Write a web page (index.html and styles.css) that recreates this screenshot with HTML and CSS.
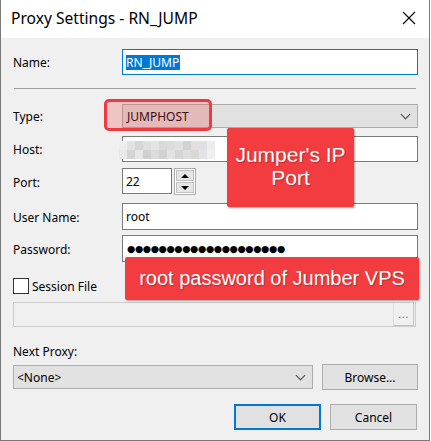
FILE: index.html
```html
<!DOCTYPE html>
<html lang="en">
<head>
  <meta charset="UTF-8">
  <title>Proxy Settings - RN_JUMP</title>
  <link rel="stylesheet" href="styles.css">
</head>
<body>
  <div class="window">
    <div class="titlebar">
      <span class="title">Proxy Settings - RN_JUMP</span>
      <svg class="close" width="14" height="14" viewBox="0 0 14 14">
        <path d="M1 1 L13 13 M13 1 L1 13" stroke="#000" stroke-width="1.1" fill="none"/>
      </svg>
    </div>

    <div class="content">
      <div class="row name-row">
        <label>Name:</label>
        <div class="field focused"><span class="selected">RN_JUMP</span></div>
      </div>

      <hr class="sep">

      <div class="row type-row">
        <label>Type:</label>
        <div class="combo"><span>JUMPHOST</span><span class="chev"></span></div>
        <div class="mark"></div>
      </div>

      <div class="row host-row">
        <label>Host:</label>
        <div class="field">
          <svg class="blur" width="104" height="18" viewBox="0 0 104 18">
            <rect x="0" y="0" width="8" height="9" fill="#eeeeee"/>
            <rect x="8" y="0" width="8" height="9" fill="#e2e2e2"/>
            <rect x="16" y="0" width="8" height="9" fill="#d6d6d6"/>
            <rect x="24" y="0" width="8" height="9" fill="#dedede"/>
            <rect x="32" y="0" width="8" height="9" fill="#e4e4e4"/>
            <rect x="40" y="0" width="8" height="9" fill="#d9d9d9"/>
            <rect x="48" y="0" width="8" height="9" fill="#dcdcdc"/>
            <rect x="56" y="0" width="8" height="9" fill="#e0e0e0"/>
            <rect x="64" y="0" width="8" height="9" fill="#d3d3d3"/>
            <rect x="72" y="0" width="8" height="9" fill="#e6dede"/>
            <rect x="80" y="0" width="8" height="9" fill="#dde1e6"/>
            <rect x="88" y="0" width="8" height="9" fill="#ececec"/>
            <rect x="0" y="9" width="8" height="9" fill="#e8e8e8"/>
            <rect x="8" y="9" width="8" height="9" fill="#d4d4d4"/>
            <rect x="16" y="9" width="8" height="9" fill="#e6e6e6"/>
            <rect x="24" y="9" width="8" height="9" fill="#d0d0d0"/>
            <rect x="32" y="9" width="8" height="9" fill="#dbdbdb"/>
            <rect x="40" y="9" width="8" height="9" fill="#d1d1d1"/>
            <rect x="48" y="9" width="8" height="9" fill="#e3e3e3"/>
            <rect x="56" y="9" width="8" height="9" fill="#d5d5d5"/>
            <rect x="64" y="9" width="8" height="9" fill="#dedede"/>
            <rect x="72" y="9" width="8" height="9" fill="#d8d8d8"/>
            <rect x="80" y="9" width="8" height="9" fill="#e4e4e4"/>
            <rect x="88" y="9" width="8" height="9" fill="#f0f0f0"/>
          </svg>
        </div>
      </div>

      <div class="row port-row">
        <label>Port:</label>
        <div class="port">
          <div class="field small">22</div>
          <div class="spin">
            <div class="spin-btn"><span class="up"></span></div>
            <div class="spin-btn"><span class="down"></span></div>
          </div>
        </div>
      </div>

      <div class="row user-row">
        <label>User Name:</label>
        <div class="field">root</div>
      </div>

      <div class="row pass-row">
        <label>Password:</label>
        <div class="field dots">●●●●●●●●●●●●●●●●●●●●</div>
      </div>

      <div class="check-row">
        <span class="box"></span>
        <span>Session File</span>
      </div>

      <div class="path">
        <span class="dots-btn">...</span>
      </div>

      <div class="next-label">Next Proxy:</div>
      <div class="next-row">
        <div class="combo plain"><span>&lt;None&gt;</span><span class="chev"></span></div>
        <div class="btn browse">Browse...</div>
      </div>

      <div class="actions">
        <div class="btn ok">OK</div>
        <div class="btn">Cancel</div>
      </div>
    </div>

    <!-- annotation callouts -->
    <div class="note note-ip">Jumper's IP<br>Port</div>
    <div class="note note-pass">root password of Jumber VPS</div>
  </div>
</body>
</html>
```

FILE: styles.css
```css
body {
  margin: 0;
  background: #fff;
  font-family: "Noto Sans", "Segoe UI", sans-serif;
  font-size: 12px;
  color: #000;
}

.window {
  position: relative;
  width: 428px;
  height: 440px;
  background: #f0f0f0;
  border-left: 1px solid #7a7a7a;
  border-right: 1px solid #7a7a7a;
  border-bottom: 1px solid #7a7a7a;
}

.titlebar {
  height: 38px;
  background: #fff;
  display: flex;
  align-items: center;
  justify-content: space-between;
  padding: 0 13px 0 10px;
}

.title {
  font-size: 15.6px;
  margin-top: -2px;
}

.close {
  margin-top: -2px;
}

.content {
  padding: 11px 11px 0 12px;
}

.row {
  position: relative;
  display: grid;
  grid-template-columns: 109px 1fr;
  align-items: center;
  margin-bottom: 6px;
}

.row label {
  padding-top: 1px;
}

.field {
  height: 26px;
  box-sizing: border-box;
  background: #fff;
  border: 1px solid #7a7a7a;
  padding: 0 3px;
  display: flex;
  align-items: center;
}

.field.focused {
  border-color: #0078d7;
}

.selected {
  background: #0078d7;
  color: #fff;
  line-height: 15px;
  padding-right: 1px;
}

.sep {
  border: 0;
  border-top: 1px solid #a0a0a0;
  margin: 13px 2px 15px 1px;
}

.combo {
  height: 24px;
  box-sizing: border-box;
  background: #e1e1e1;
  border: 1px solid #adadad;
  display: flex;
  align-items: center;
  justify-content: space-between;
  padding: 0 8px 0 4px;
}

.chev {
  width: 6px;
  height: 6px;
  border-right: 1px solid #444;
  border-bottom: 1px solid #444;
  transform: rotate(45deg);
  margin-top: -4px;
}

.type-row {
  margin-bottom: 8px;
}

/* red box drawn around the type value */
.mark {
  position: absolute;
  left: 91px;
  top: -5px;
  width: 102px;
  height: 26px;
  border: 3px solid #ef3b3f;
  border-radius: 5px;
  background: rgba(239, 59, 63, 0.24);
}

.host-row .field {
  padding: 0;
  overflow: visible;
}

.blur {
  margin-left: -4px;
  margin-top: 1px;
}

.port {
  display: flex;
  gap: 2px;
}

.field.small {
  width: 50px;
}

.spin {
  width: 22px;
  height: 27px;
  box-sizing: border-box;
  border: 1px solid #adadad;
  display: flex;
  flex-direction: column;
  gap: 1px;
  padding: 1px;
  background: #fff;
}

.spin-btn {
  flex: 1;
  background: #e5e5e5;
  border: 1px solid #c0c0c0;
  display: flex;
  align-items: center;
  justify-content: center;
}

.up {
  border-left: 4px solid transparent;
  border-right: 4px solid transparent;
  border-bottom: 4px solid #000;
}

.down {
  border-left: 4px solid transparent;
  border-right: 4px solid transparent;
  border-top: 4px solid #000;
}

.port-row {
  margin-bottom: 8px;
}

.user-row .field {
  height: 27px;
}

.user-row {
  margin-bottom: 5px;
}

.dots {
  font-family: "DejaVu Sans", sans-serif;
  font-size: 9.5px;
  letter-spacing: -0.4px;
  padding-left: 4px;
  padding-bottom: 1px;
  height: 27px;
}

.check-row {
  display: flex;
  align-items: center;
  gap: 3px;
  margin-top: 16px;
  height: 16px;
}

.box {
  width: 16px;
  height: 16px;
  box-sizing: border-box;
  border: 1px solid #333;
  background: #fff;
}

.path {
  margin-top: 8px;
  margin-right: 2px;
  height: 25px;
  box-sizing: border-box;
  border: 1px solid #cccccc;
  display: flex;
  justify-content: flex-end;
  padding: 0 1px;
}

.dots-btn {
  width: 19px;
  height: 22px;
  border-left: 1px solid #ddd;
  border-right: 1px solid #c4c4c4;
  border-bottom: 1px solid #c4c4c4;
  color: #6d6d6d;
  text-align: center;
  line-height: 22px;
  font-size: 11px;
  letter-spacing: 0.5px;
}

.next-label {
  margin-top: 16px;
  height: 17px;
}

.next-row {
  display: flex;
  justify-content: space-between;
  align-items: center;
  margin-top: 4px;
}

.combo.plain {
  width: 300px;
  padding-left: 3px;
}

.btn {
  width: 87px;
  height: 26px;
  box-sizing: border-box;
  background: #e1e1e1;
  border: 1px solid #adadad;
  display: flex;
  align-items: center;
  justify-content: center;
}

.browse {
  width: 96px;
}

.actions {
  display: flex;
  justify-content: flex-end;
  gap: 9px;
  margin-top: 14px;
  margin-right: 1px;
}

.btn.ok {
  border: 2px solid #0078d7;
}

.note {
  position: absolute;
  background: #f23c40;
  color: #fff;
  font-family: "Liberation Sans", Arial, sans-serif;
  text-align: center;
  border-radius: 2px;
  box-shadow: 1px 1px 2px rgba(0, 0, 0, 0.35);
  text-shadow: 1px 1px 1px rgba(0, 0, 0, 0.25);
}

.note-ip {
  left: 226px;
  top: 128px;
  width: 127px;
  height: 79px;
  font-size: 21px;
  line-height: 23px;
  box-sizing: border-box;
  padding-top: 15px;
}

.note-pass {
  left: 124px;
  top: 257px;
  width: 294px;
  height: 43px;
  font-size: 20px;
  line-height: 43px;
}
```
